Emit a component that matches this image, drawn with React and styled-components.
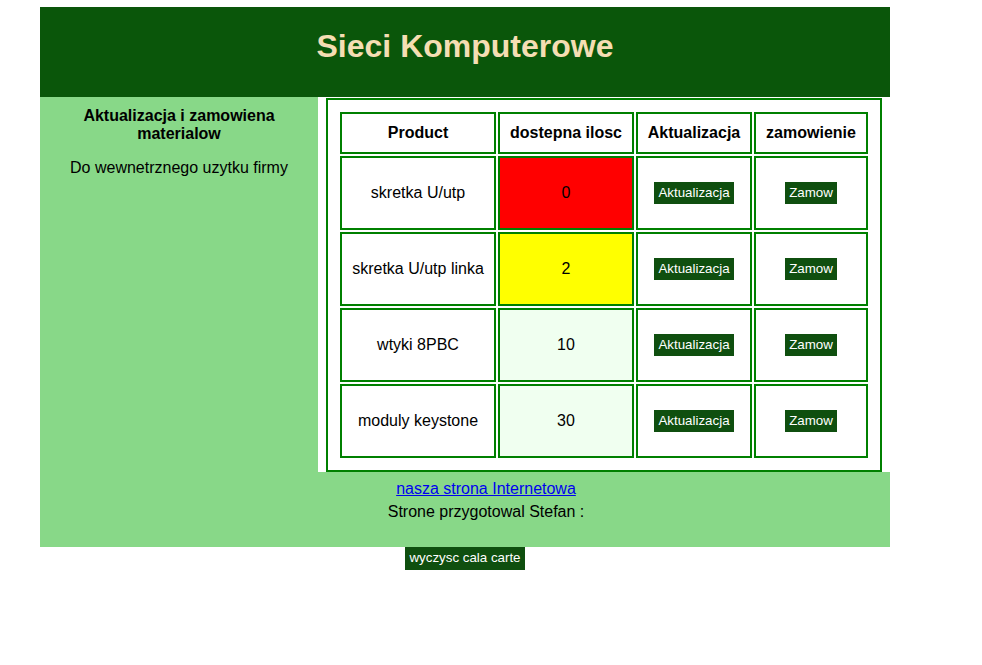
import React from "react";
import styled, { createGlobalStyle } from "styled-components";

const GlobalStyle = createGlobalStyle`
  html, body { margin: 0; padding: 0; background: #ffffff; }
  body { font-family: "Liberation Sans", Arial, sans-serif; color: #000; }
`;

const Page = styled.div`
  width: 850px;
  padding: 7px 0 0 40px;
`;

const Header = styled.h1`
  margin: 0;
  height: 90px;
  box-sizing: border-box;
  padding-top: 21px;
  background: #0a560a;
  color: #f5deb3;
  font-size: 32px;
  line-height: 37px;
  font-weight: bold;
  text-align: center;
`;

const Main = styled.div`
  display: flex;
`;

const Sidebar = styled.aside`
  width: 278px;
  flex: none;
  background: #88d888;
  padding: 10px 8px 0;
  box-sizing: border-box;
  text-align: center;
`;

const SideTitle = styled.h4`
  margin: 0;
  font-size: 16px;
  line-height: 18px;
  font-weight: bold;
`;

const SideText = styled.p`
  margin: 16px 0 0;
  font-size: 16px;
  line-height: 18px;
`;

const Content = styled.section`
  flex: 1;
  background: #ffffff;
  padding: 1px 8px 0;
`;

const Box = styled.div`
  border: 2px solid #008000;
  padding: 10px;
`;

const Table = styled.table`
  border-collapse: separate;
  border-spacing: 2px;
  font-size: 16px;
`;

const Th = styled.th`
  box-sizing: border-box;
  border: 2px solid #008000;
  height: 42px;
  width: ${(p) => p.$w}px;
  padding: 0;
  font-weight: bold;
  text-align: center;
  line-height: 18px;
`;

const Td = styled.td`
  box-sizing: border-box;
  border: 2px solid #008000;
  height: 74px;
  padding: 0;
  text-align: center;
  line-height: 18px;
  background: ${(p) => p.$bg || "#ffffff"};
`;

const ActionButton = styled.button`
  font-family: "Liberation Sans", Arial, sans-serif;
  font-size: 13.33px;
  line-height: 16px;
  padding: 3px 4px;
  border: none;
  background: #0f4f0f;
  color: #ffffff;
  cursor: pointer;
`;

const Footer = styled.footer`
  background: #88d888;
  height: 75px;
  box-sizing: border-box;
  padding: 8px 0 0 42px;
  text-align: center;
  font-size: 16px;
  line-height: 18px;
`;

const FooterLink = styled.a`
  color: #0000ee;
  text-decoration: underline;
`;

const FooterText = styled.p`
  margin: 5px 0 0;
`;

const ClearRow = styled.div`
  text-align: center;
`;

const ClearButton = styled(ActionButton)`
  padding: 3px 4px 4px;
`;

const widths = [156, 136, 116, 114];

const rows = [
  { name: "skretka U/utp", qty: 0, bg: "#ff0000" },
  { name: "skretka U/utp linka", qty: 2, bg: "#ffff00" },
  { name: "wtyki 8PBC", qty: 10, bg: "#f0fff0" },
  { name: "moduly keystone", qty: 30, bg: "#f0fff0" },
];

export default function App() {
  return (
    <>
      <GlobalStyle />
      <Page>
        <Header>Sieci Komputerowe</Header>
        <Main>
          <Sidebar>
            <SideTitle>Aktualizacja i zamowiena materialow</SideTitle>
            <SideText>Do wewnetrznego uzytku firmy</SideText>
          </Sidebar>
          <Content>
            <Box>
              <Table>
                <thead>
                  <tr>
                    <Th $w={widths[0]}>Product</Th>
                    <Th $w={widths[1]}>dostepna ilosc</Th>
                    <Th $w={widths[2]}>Aktualizacja</Th>
                    <Th $w={widths[3]}>zamowienie</Th>
                  </tr>
                </thead>
                <tbody>
                  {rows.map((r) => (
                    <tr key={r.name}>
                      <Td>{r.name}</Td>
                      <Td $bg={r.bg}>{r.qty}</Td>
                      <Td>
                        <ActionButton>Aktualizacja</ActionButton>
                      </Td>
                      <Td>
                        <ActionButton>Zamow</ActionButton>
                      </Td>
                    </tr>
                  ))}
                </tbody>
              </Table>
            </Box>
          </Content>
        </Main>
        <Footer>
          <FooterLink href="#">nasza strona Internetowa</FooterLink>
          <FooterText>Strone przygotowal Stefan :</FooterText>
        </Footer>
        <ClearRow>
          <ClearButton>wyczysc cala carte</ClearButton>
        </ClearRow>
      </Page>
    </>
  );
}
